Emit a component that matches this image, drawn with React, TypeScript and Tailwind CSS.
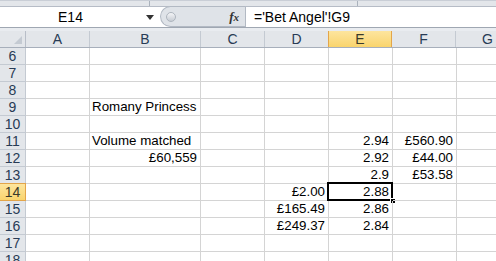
import React from 'react';

const cols = [
    { name: 'A', w: 'w-[64px]' },
    { name: 'B', w: 'w-[111px]' },
    { name: 'C', w: 'w-[64px]' },
    { name: 'D', w: 'w-[64px]' },
    { name: 'E', w: 'w-[64px]' },
    { name: 'F', w: 'w-[64px]' },
    { name: 'G', w: 'w-[64px]' },
];

type Cell = { text: string; right?: boolean };

const data: Record<number, Record<string, Cell>> = {
    9: { B: { text: 'Romany Princess' } },
    11: { B: { text: 'Volume matched' }, E: { text: '2.94', right: true }, F: { text: '£560.90', right: true } },
    12: { B: { text: '£60,559', right: true }, E: { text: '2.92', right: true }, F: { text: '£44.00', right: true } },
    13: { E: { text: '2.9', right: true }, F: { text: '£53.58', right: true } },
    14: { D: { text: '£2.00', right: true }, E: { text: '2.88', right: true } },
    15: { D: { text: '£165.49', right: true }, E: { text: '2.86', right: true } },
    16: { D: { text: '£249.37', right: true }, E: { text: '2.84', right: true } },
};

const rows = [6, 7, 8, 9, 10, 11, 12, 13, 14, 15, 16, 17, 18];

export default function App() {
    return (
        <div className="w-[496px] h-[261px] overflow-hidden bg-white font-['Liberation_Sans',Arial,sans-serif] text-[14px] text-black">
            {/* ribbon edge */}
            <div className="h-[6px] flex bg-[#e3e6ea] border-t border-[#c9ced6]">
                <div className="w-[150px] border-r border-[#aab2bc]" />
                <div className="w-[208px] border-r border-[#aab2bc]" />
            </div>

            {/* formula bar */}
            <div className="h-[21px] flex border-t border-[#b6bcc6]">
                <div className="w-[160px] flex items-center bg-white">
                    <span className="w-[141px] text-center leading-none">E14</span>
                    <svg width="8" height="5" viewBox="0 0 8 5" className="ml-[5px]">
                        <path d="M0 0 H8 L4 5 Z" fill="#333" />
                    </svg>
                </div>
                <div className="w-[85px] flex items-center bg-[#dfe3e8] rounded-l-[11px] border border-r-0 border-[#b2b9c3] -mt-px">
                    <div className="ml-[5px] w-[10px] h-[10px] rounded-full bg-gradient-to-b from-[#f4f5f7] to-[#c7ccd3] border border-[#aeb5be]" />
                    <span className="ml-auto mr-[6px] font-['Liberation_Serif',serif] italic text-[13px] font-bold text-[#333]">
                        f<span className="text-[11px]">x</span>
                    </span>
                </div>
                <div className="flex-1 flex items-center bg-white border-l border-[#b2b9c3] pl-[8px]">
                    <span className="leading-none">='Bet Angel'!G9</span>
                </div>
            </div>

            {/* separator */}
            <div className="h-[4px] bg-[#e9ecf0] border-t border-[#9fa7b2]" />

            {/* header row */}
            <div className="flex h-[17px] border-b border-[#a7afbb] bg-[#e3e6ea] text-[#283b55]">
                <div className="w-[26px] shrink-0 relative border-r border-[#b8bec8]">
                    <svg width="8" height="8" viewBox="0 0 8 8" className="absolute right-[3px] bottom-[3px]">
                        <path d="M8 0 V8 H0 Z" fill="#c4cad2" />
                    </svg>
                </div>
                {cols.map((c) => (
                    <div
                        key={c.name}
                        className={
                            c.name === 'E'
                                ? `${c.w} shrink-0 flex items-center justify-center border-r border-l border-[#e3a54a] -ml-px bg-gradient-to-b from-[#fde59e] to-[#f9d46c] text-[#3a3a2a]`
                                : `${c.w} shrink-0 flex items-center justify-center border-r border-[#c4cad2]`
                        }
                    >
                        {c.name}
                    </div>
                ))}
            </div>

            {/* cells */}
            {rows.map((r) => (
                <div key={r} className="flex h-[17px]">
                    <div
                        className={
                            r === 14
                                ? 'w-[26px] shrink-0 flex items-end justify-center leading-[16px] bg-gradient-to-b from-[#fde59e] to-[#f9d46c] border-r border-b border-t border-[#e3a54a] -mt-px h-[18px] text-[#3a3a2a]'
                                : 'w-[26px] shrink-0 flex items-end justify-center leading-[16px] bg-[#e3e6ea] border-r border-b border-[#c4cad2] text-[#283b55]'
                        }
                    >
                        {r}
                    </div>
                    {cols.map((c) => {
                        const cell = data[r]?.[c.name];
                        const selected = r === 14 && c.name === 'E';
                        return (
                            <div
                                key={c.name}
                                className={`${c.w} shrink-0 relative border-r border-b border-[#d4d4d4] flex items-end text-[13.33px] leading-[16px] whitespace-nowrap ${cell?.right ? 'justify-end pr-[3px]' : 'pl-[2px]'}`}
                            >
                                {cell?.text}
                                {selected && (
                                    <>
                                        <div className="absolute -left-[2px] -top-[2px] -right-[1px] -bottom-[1px] border-2 border-black pointer-events-none" />
                                        <div className="absolute -right-[4px] -bottom-[4px] w-[6px] h-[6px] bg-black border border-white" />
                                    </>
                                )}
                            </div>
                        );
                    })}
                </div>
            ))}
        </div>
    );
}
